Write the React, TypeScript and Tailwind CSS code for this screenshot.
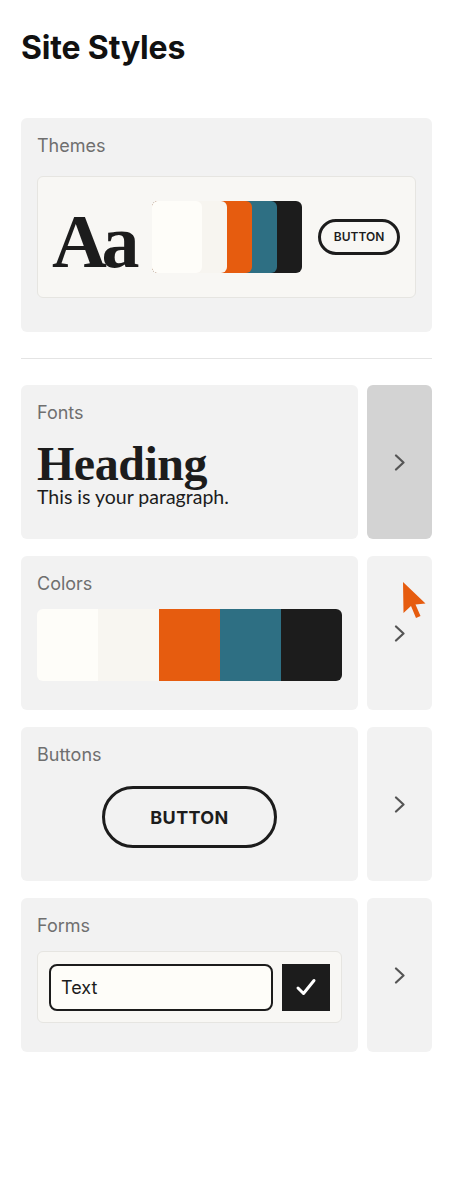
import { ReactNode } from "react";

const sans = "font-['Inter','Liberation_Sans',sans-serif]";
const serif = "font-['Liberation_Serif','DejaVu_Serif',serif]";

function Chevron() {
  return (
    <svg width="12" height="17" viewBox="0 0 12 17" fill="none">
      <path d="M2 1.5 9.5 8.5 2 15.5" stroke="#555" strokeWidth="2.2" strokeLinecap="round" strokeLinejoin="round" />
    </svg>
  );
}

function Label({ children }: { children: ReactNode }) {
  return <div className={`${sans} text-[18px] leading-[24px] text-[#6f6f6f]`}>{children}</div>;
}

function Row({ label, children, active, cursor }: { label: string; children: ReactNode; active?: boolean; cursor?: boolean }) {
  return (
    <div className="flex h-[154px] gap-[9px]">
      <div className="flex-1 rounded-md bg-[#f2f2f2] px-4 pt-4">
        <Label>{label}</Label>
        {children}
      </div>
      <div
        className={`relative flex w-[65px] items-center justify-center rounded-md ${
          active ? "bg-[#d3d3d3]" : "bg-[#f2f2f2]"
        }`}
      >
        <Chevron />
        {cursor && (
          <svg className="absolute left-[35px] top-[25px]" width="26" height="40" viewBox="0 0 26 40">
            <path d="M1 1 L1.5 32 L9 25 L14 37 L18.5 35 L13.5 23.5 L23.5 22.5 Z" fill="#e65c0f" />
          </svg>
        )}
      </div>
    </div>
  );
}

function Palette() {
  // stacked swatches, each sitting on top of the next darker one
  return (
    <div className="h-[72px] w-[150px] rounded-md bg-[#1c1c1c]">
      <div className="h-full w-[125px] rounded-md bg-[#2e6f83]">
        <div className="h-full w-[100px] rounded-md bg-[#e65c0f]">
          <div className="h-full w-[75px] rounded-md bg-[#f7f5f0]">
            <div className="h-full w-[50px] rounded-md bg-[#fefdf9]" />
          </div>
        </div>
      </div>
    </div>
  );
}

export default function App() {
  return (
    <div className="min-h-screen w-full bg-white">
      <div className="ml-[21px] w-[411px] pb-[140px]">
        <h1 className={`${sans} pt-[28px] text-[32px] font-bold leading-[40px] tracking-[-0.005em] text-[#111]`}>
          Site Styles
        </h1>

        <div className="mt-[50px] h-[214px] rounded-md bg-[#f2f2f2] px-4 pt-4">
          <Label>Themes</Label>
          <div className="mt-[18px] flex h-[122px] items-center gap-4 rounded-md border border-[#e6e5e1] bg-[#f8f7f4] px-[14px]">
            <div className={`${serif} mt-[8px] w-[84px] text-[76px] font-bold leading-none tracking-[-0.07em] text-[#1c1c1c]`}>
              Aa
            </div>
            <Palette />
            <div
              className={`${sans} flex h-[36px] w-[82px] items-center justify-center rounded-full border-[3px] border-[#1c1c1c] text-[12px] font-semibold text-[#1c1c1c]`}
            >
              BUTTON
            </div>
          </div>
        </div>

        <div className="my-[26px] h-px bg-[#e4e4e4]" />

        <div className="flex flex-col gap-[17px]">
          <Row label="Fonts" active>
            <div className={`${serif} mt-[17px] text-[48px] font-bold leading-[44px] tracking-[-0.01em] text-[#1c1c1c]`}>
              Heading
            </div>
            <div className="mt-px font-['Lato','Open_Sans',sans-serif] text-[19.5px] leading-[20px] text-[#1c1c1c]">
              This is your paragraph.
            </div>
          </Row>

          <Row label="Colors" cursor>
            <div className="mt-[13px] flex h-[72px] overflow-hidden rounded-md">
              <div className="flex-1 bg-[#fefdf9]" />
              <div className="flex-1 bg-[#f8f6f1]" />
              <div className="flex-1 bg-[#e65c0f]" />
              <div className="flex-1 bg-[#2e6f83]" />
              <div className="flex-1 bg-[#1c1c1c]" />
            </div>
          </Row>

          <Row label="Buttons">
            <div className="mt-[19px] flex justify-center">
              <div
                className={`${sans} flex h-[62px] w-[175px] items-center justify-center rounded-full border-[3px] border-[#1c1c1c] text-[18px] font-bold tracking-[0.02em] text-[#1c1c1c]`}
              >
                BUTTON
              </div>
            </div>
          </Row>

          <Row label="Forms">
            <div className="mt-[13px] flex h-[72px] items-center gap-[9px] rounded-md border border-[#e6e5e1] bg-[#f8f7f4] px-[11px]">
              <div className={`${sans} flex h-[47px] flex-1 items-center rounded-lg border-2 border-[#1c1c1c] bg-[#fefdf9] px-[10px] text-[18px] text-[#1c1c1c]`}>
                Text
              </div>
              <div className="flex h-[47px] w-[48px] items-center justify-center bg-[#1c1c1c]">
                <svg width="22" height="20" viewBox="0 0 22 20" fill="none">
                  <path d="M3 11 8.5 16.5 19 3.5" stroke="#fff" strokeWidth="3" strokeLinecap="round" strokeLinejoin="round" />
                </svg>
              </div>
            </div>
          </Row>
        </div>
      </div>
    </div>
  );
}
